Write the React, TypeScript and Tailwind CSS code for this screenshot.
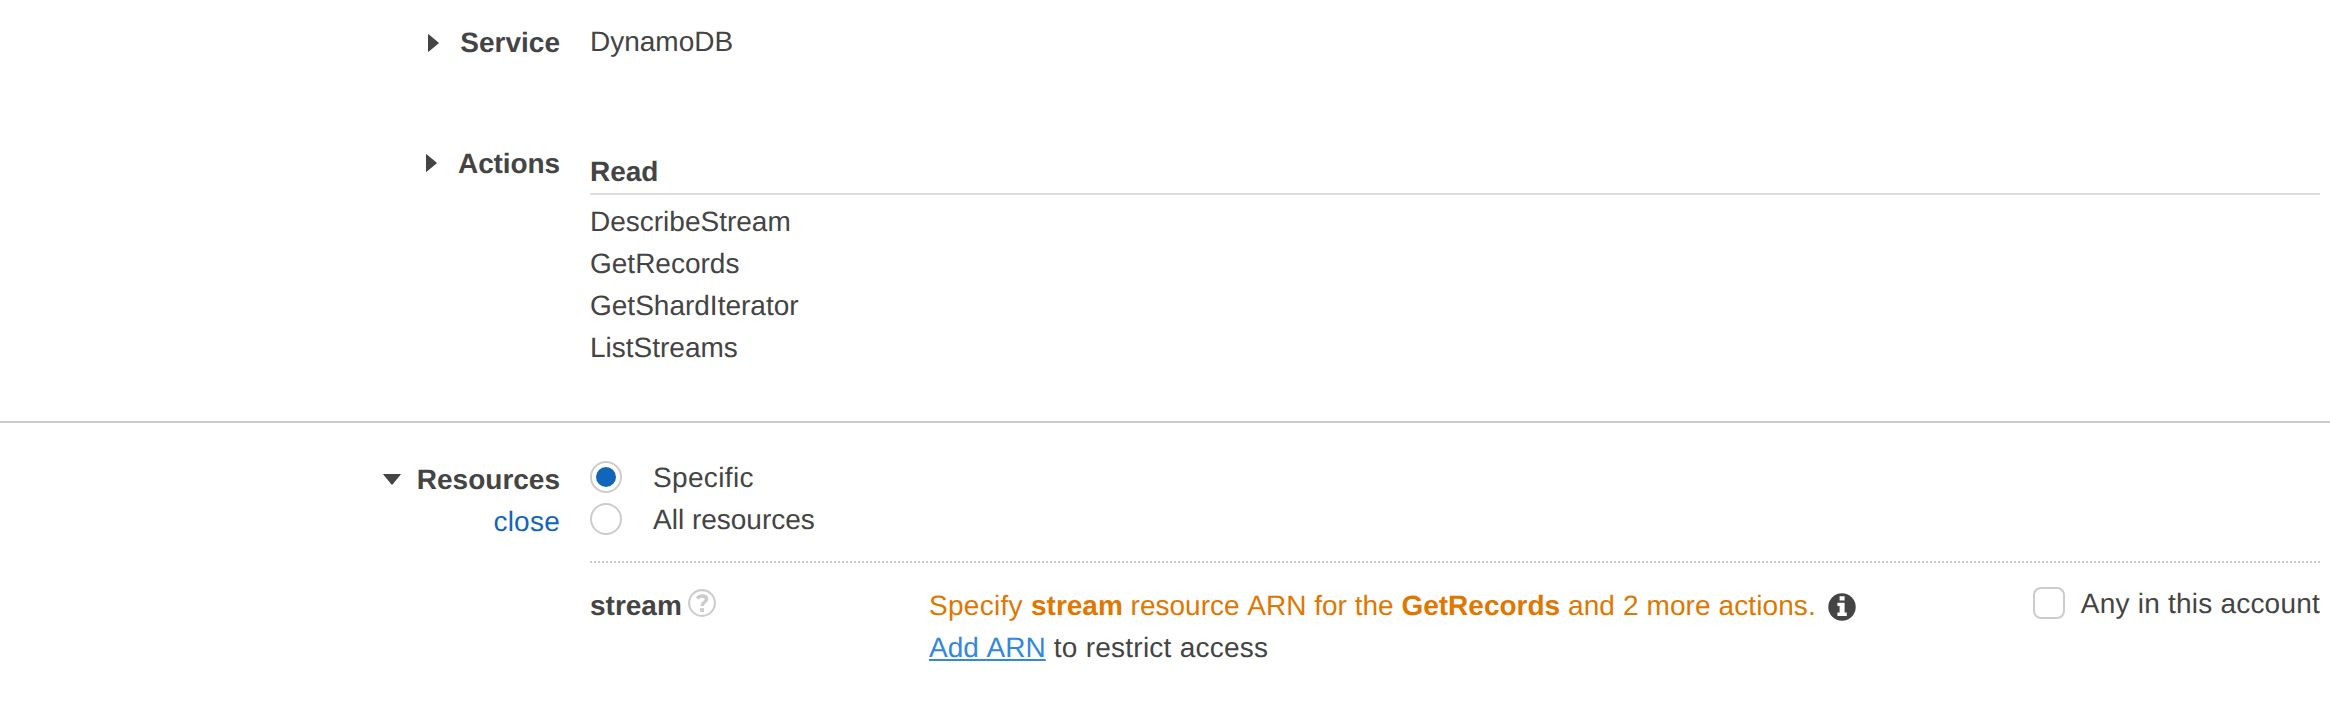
import type { ReactNode } from "react";

function CaretRight() {
  return (
    <svg className="h-[18px] w-[11px] shrink-0" viewBox="0 0 11 18" fill="#444">
      <path d="M0 .6Q0 0 .6 .3L10.500 8.500Q11 9 10.500 9.500L.6 17.700Q0 18 0 17.400Z" />
    </svg>
  );
}

function CaretDown() {
  return (
    <svg className="h-[11px] w-[18px] shrink-0" viewBox="0 0 18 11" fill="#444">
      <path d="M.6 0Q0 0 .3 .6L8.500 10.500Q9 11 9.500 10.500L17.700 .6Q18 0 17.400 0Z" />
    </svg>
  );
}

function QuestionIcon() {
  return (
    <svg className="mt-[4px] ml-[6px] size-[28px] shrink-0" viewBox="0 0 28 28" fill="none" stroke="#ccc">
      <circle cx="14" cy="14" r="12.9" strokeWidth="2.1" />
      <path d="M9.2 9.6C10.6 7.6 12 7 14 7C16.700 7 18.600 8.300 18.600 10.300C18.600 13.300 14.100 13 14.100 16.900" strokeWidth="3.500" />
      <path d="M12.100 19.200H16V23H12.100Z" fill="#ccc" stroke="none" />
    </svg>
  );
}

function InfoIcon() {
  return (
    <svg className="mt-[8px] ml-[12px] size-[28px] shrink-0" viewBox="0 0 28 28">
      <circle cx="14" cy="14" r="13.7" fill="#444" />
      <path d="M11.600 3.200H16.600V7.500H11.600ZM9.400 9.700H16.600V19.600H18.800V23H9.400V19.600H11.600V13H9.400Z" fill="#fff" />
    </svg>
  );
}

function Radio({ children, checked }: { children: ReactNode; checked?: boolean }) {
  return (
    <label className="flex h-[42px]">
      <span className="mt-[5px] flex size-8 items-center justify-center rounded-full border-2 border-[#ccc]">
        {checked && <span className="size-5 rounded-full bg-[#1166bb]" />}
      </span>
      <span className="ml-[31px] pt-px">{children}</span>
    </label>
  );
}

function RowLabel({ caret, children }: { caret: ReactNode; children: ReactNode }) {
  return (
    <div className="flex items-center justify-end">
      {caret}
      <span className="font-bold">{children}</span>
    </div>
  );
}

const actions = ["DescribeStream", "GetRecords", "GetShardIterator", "ListStreams"];

export default function App() {
  return (
    <div className="h-[706px] w-[2330px] overflow-hidden bg-white font-['Liberation_Sans',Arial,sans-serif] text-[28px] leading-[42px] whitespace-nowrap text-[#444] [font-kerning:none] [text-rendering:geometricPrecision]">
      <section className="flex h-[121px] pt-[21px]">
        <div className="w-[560px] pt-px">
          <RowLabel caret={<span className="mr-[21px] flex"><CaretRight /></span>}>Service</RowLabel>
        </div>
        <div className="ml-[30px]">DynamoDB</div>
      </section>

      <section className="flex h-[302px] border-b-2 border-[#ccc] pt-[22px]">
        <div className="w-[560px]">
          <RowLabel caret={<span className="mr-[21px] flex pb-[2px]"><CaretRight /></span>}>
            <span className="tracking-[-0.1px]">Actions</span>
          </RowLabel>
        </div>
        <div className="mr-[10px] ml-[30px] flex-1 pt-2">
          <h2 className="h-[44px] border-b-2 border-[#ddd] font-bold">Read</h2>
          <ul className="pt-[6px]">
            {actions.map((action) => (
              <li key={action}>{action}</li>
            ))}
          </ul>
        </div>
      </section>

      <section className="flex pt-[33px]">
        <div className="w-[560px] pt-[3px]">
          <RowLabel caret={<span className="mr-[16px] flex pb-px"><CaretDown /></span>}>Resources</RowLabel>
          <div className="text-right tracking-[0.25px] text-[#1166bb]">close</div>
        </div>
        <div className="mr-[10px] ml-[30px] flex-1">
          <Radio checked>
            <span className="tracking-[0.35px]">Specific</span>
          </Radio>
          <Radio>All resources</Radio>
          <div className="mt-[21px] h-[2px] bg-[repeating-linear-gradient(90deg,#ccc_0_2px,transparent_2px_4px)]" />
          <div className="flex pt-[19px]">
            <div className="flex w-[339px] pt-[3px]">
              <span className="font-bold">stream</span>
              <QuestionIcon />
            </div>
            <div className="flex-1 pt-[3px]">
              <div className="flex text-[#e07700]">
                <p>
                  <span className="tracking-[0.3px]">Specify </span>
                  <b>stream</b> resource ARN for the <b>GetRecords</b>
                  <span className="tracking-[0.1px]"> and 2 more actions.</span>
                </p>
                <InfoIcon />
              </div>
              <p>
                <a className="text-[#3388dd] underline decoration-2 underline-offset-[2px]">Add ARN</a>
                <span className="tracking-[0.25px]"> to restrict access</span>
              </p>
            </div>
            <label className="flex">
              <span className="mt-[5px] mr-4 size-8 rounded-lg border-2 border-[#ccc]" />
              <span className="pt-px tracking-[0.22px]">Any in this account</span>
            </label>
          </div>
        </div>
      </section>
    </div>
  );
}
